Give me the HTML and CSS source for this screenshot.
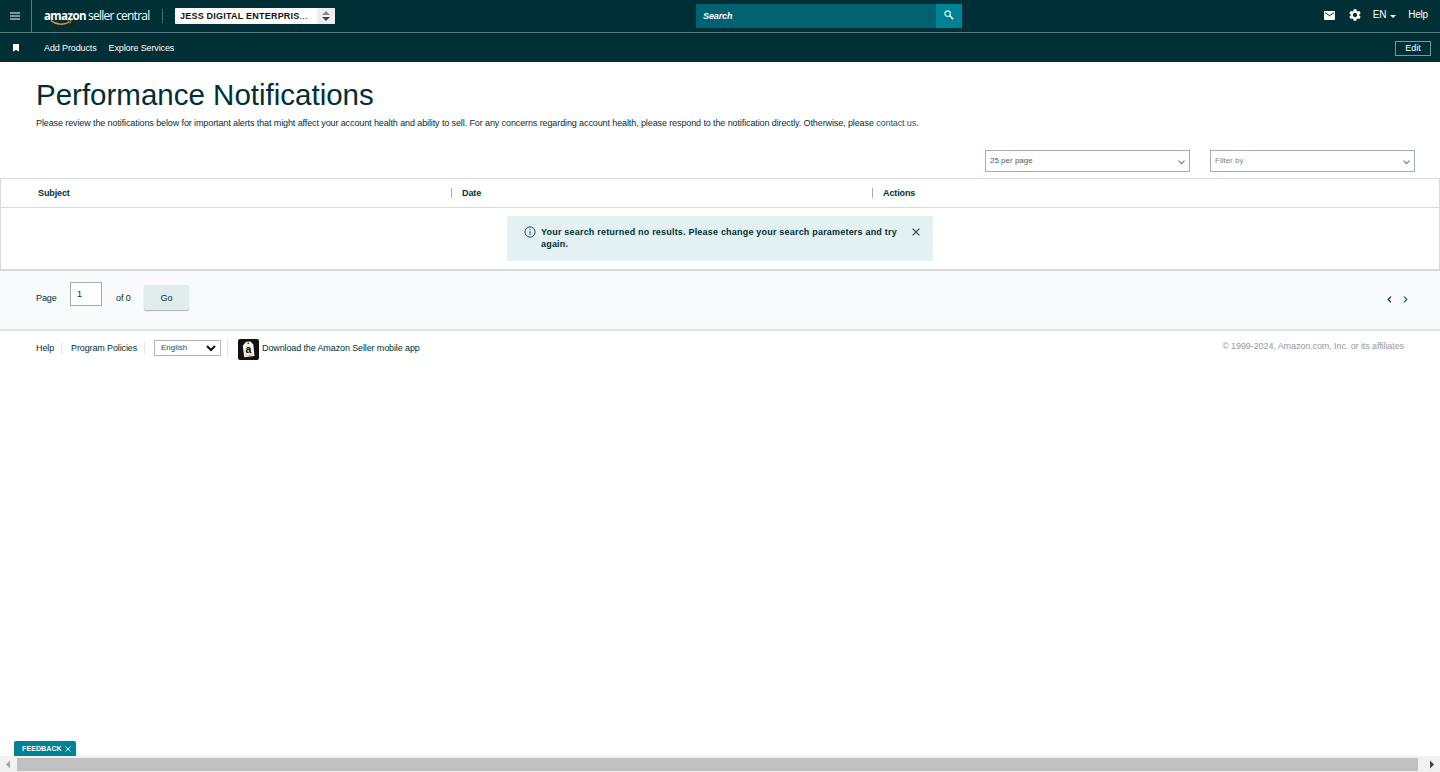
FILE: index.html
```html
<!DOCTYPE html>
<html lang="en">

<head>
    <meta charset="UTF-8">
    <meta name="viewport" content="width=device-width, initial-scale=1.0">
    <title>Performance Notifications</title>
    <link rel="stylesheet" href="styles.css">
</head>

<body>

    <header>
        <div class="topbar">
            <button type="button" class="menu-btn" aria-label="Menu">
                <svg width="10" height="8" viewBox="0 0 10 8"><path d="M0 1h10M0 4h10M0 7h10" stroke="#fff" stroke-width="1.2"/></svg>
            </button>
            <div class="logo">
                <span class="logo-bold">amazon</span><span class="logo-thin">seller central</span>
                <svg class="smile" width="23" height="7" viewBox="0 0 23 7" fill="none" stroke="#f0962a"><path d="M1 1.500c5 4.500 13 5 18.500 1.300" stroke-width="1.300"/><path d="M17.500 1.200c3-.8 4-.3 2.500 3.300"/></svg>
            </div>
            <div class="account">
                <span class="account-name">JESS DIGITAL ENTERPRIS<span class="dots">...</span></span>
                <span class="account-arrows">
                    <svg width="8" height="10" viewBox="0 0 8 10"><path d="M0 4l4-4 4 4z" fill="#888"/><path d="M0 6h8l-4 4z" fill="#444"/></svg>
                </span>
            </div>
            <form class="search">
                <div class="search-field">Search</div>
                <button type="button" class="search-btn" aria-label="Search">
                    <svg width="10" height="10" viewBox="0 0 11 11" fill="none" stroke="#e8f8fa"><circle cx="4" cy="4" r="3" stroke-width="1.300"/><path d="M6.300 6.300L10 10" stroke-width="1.700"/></svg>
                </button>
            </form>
            <nav class="tools">
                <svg class="mail" width="11" height="9" viewBox="0 0 11 9"><rect width="11" height="9" rx="1" fill="#fff"/><path d="M1 1.700l4.500 3 4.500-3" fill="none" stroke="#002f36"/></svg>
                <svg class="gear" width="12" height="12" viewBox="2 2 20 20"><path fill="#fff" d="M19.140 12.940c.04-.3.060-.61.060-.94 0-.32-.02-.64-.07-.94l2.030-1.580c.18-.14.230-.41.120-.61l-1.920-3.320c-.12-.22-.37-.29-.59-.22l-2.390.96c-.5-.38-1.030-.7-1.620-.94l-.36-2.540c-.04-.24-.24-.41-.48-.41h-3.840c-.24 0-.43.170-.47.410l-.36 2.540c-.59.240-1.130.570-1.620.940l-2.390-.96c-.22-.08-.47 0-.59.220L2.740 8.870c-.12.210-.08.470.12.610l2.030 1.580c-.05.300-.09.630-.09.940s.02.640.07.940l-2.030 1.580c-.18.140-.23.410-.12.610l1.920 3.320c.12.220.37.290.59.220l2.390-.96c.5.380 1.030.7 1.620.940l.36 2.540c.05.240.24.410.48.410h3.840c.24 0 .44-.17.470-.41l.36-2.540c.59-.24 1.130-.56 1.620-.94l2.390.96c.22.080.47 0 .59-.22l1.920-3.320c.12-.22.070-.47-.12-.61l-2.010-1.580zM12 15.600c-1.980 0-3.600-1.620-3.600-3.600s1.620-3.600 3.600-3.600 3.600 1.620 3.600 3.600-1.620 3.600-3.600 3.600z"/></svg>
                <span class="lang">EN</span>
                <svg class="caret" width="6" height="3" viewBox="0 0 6 3"><path d="M0 0h6L3 3z" fill="#fff"/></svg>
                <span class="help">Help</span>
            </nav>
        </div>
        <div class="subbar">
            <svg class="bookmark" width="6" height="8" viewBox="0 0 6 8"><path d="M0 0h6v7.500L3 6 0 7.500z" fill="#fff"/></svg>
            <a class="add">Add Products</a>
            <a class="explore">Explore Services</a>
            <button type="button" class="edit">Edit</button>
        </div>
    </header>

    <main>
        <h1>Performance Notifications</h1>
        <p class="intro">Please review the notifications below for important alerts that might affect your account health and ability to sell. For any concerns regarding account health, please respond to the notification directly. Otherwise, please <a>contact us</a>.</p>

        <div class="filters">
            <div class="dropdown per-page">
                <span>25 per page</span>
                <svg width="7" height="5" viewBox="0 0 7 5"><path d="M.5.700l3 3 3-3" fill="none" stroke="#758083" stroke-width="1.200"/></svg>
            </div>
            <div class="dropdown filter-by">
                <span>Filter by</span>
                <svg width="7" height="5" viewBox="0 0 7 5"><path d="M.5.700l3 3 3-3" fill="none" stroke="#758083" stroke-width="1.200"/></svg>
            </div>
        </div>

        <section class="table">
            <div class="table-head">
                <div class="subject">Subject</div>
                <div class="date">Date</div>
                <div class="actions">Actions</div>
            </div>
            <div class="table-body">
                <div class="alert">
                    <svg class="info" width="12" height="12" viewBox="0 0 12 12" fill="none" stroke="#25474f"><circle cx="6" cy="6" r="5.100"/><path d="M6 5.200v3.600M6 3v1.200"/></svg>
                    <p>Your search returned no results. Please change your search parameters and try<br>again.</p>
                    <svg class="close" width="8" height="8" viewBox="0 0 8 8"><path d="M.6.600l6.800 6.800M7.400.600L.6 7.400" stroke="#1b3d45" stroke-width="1.100"/></svg>
                </div>
            </div>
        </section>

        <section class="pager">
            <span class="page-label">Page</span>
            <div class="page-input">1</div>
            <span class="page-total">of 0</span>
            <button type="button" class="go">Go</button>
            <div class="arrows">
                <svg width="5" height="7" viewBox="0 0 5 7"><path d="M4 .7L1.200 3.500 4 6.300" fill="none" stroke="#002f36" stroke-width="1.200"/></svg>
                <svg width="5" height="7" viewBox="0 0 5 7"><path d="M1 .7l2.800 2.800L1 6.300" fill="none" stroke="#006078" stroke-width="1.200"/></svg>
            </div>
        </section>

        <footer>
            <a class="foot-help">Help</a>
            <a class="foot-policies">Program Policies</a>
            <div class="foot-lang">
                <div class="lang-select">
                    <span>English</span>
                    <svg width="10" height="7" viewBox="0 0 10 7"><path d="M1 1l4 4 4-4" fill="none" stroke="#111" stroke-width="2"/></svg>
                </div>
            </div>
            <svg class="app-icon" width="21" height="21" viewBox="0 0 21 21">
                <rect width="21" height="21" rx="2" fill="#111"/>
                <path d="M4.800 6.500l3.400-3.700 4.300-.4 2.800 3.200 1.200 11.400-10.300 1.300z" fill="#f5f2ea"/>
                <circle cx="10.200" cy="4.300" r=".8" fill="#111"/>
                <path d="M7.500 15.800c2.500 1 5 .8 7-.5" fill="none" stroke="#e59a35" stroke-width=".8"/>
                <text class="app-letter" x="7.600" y="13.800">a</text>
            </svg>
            <a class="foot-app">Download the Amazon Seller mobile app</a>
            <span class="copyright">© 1999-2024, Amazon.com, Inc. or its affiliates</span>
        </footer>
    </main>

    <div class="feedback">
        <span>FEEDBACK</span>
        <svg width="6" height="6" viewBox="0 0 6 6"><path d="M.5.500l5 5M5.500.500l-5 5" stroke="#fff" stroke-width=".9"/></svg>
    </div>

    <div class="scrollbar">
        <svg width="17" height="16" viewBox="0 0 17 16"><path d="M10 4.500v8L6 8.500z" fill="#a3a3a3"/></svg>
        <div class="thumb"></div>
        <svg width="22" height="16" viewBox="0 0 22 16"><path d="M12 4.500v8l4-4z" fill="#444"/></svg>
    </div>

</body>

</html>
```
FILE: styles.css
```css
* {
    box-sizing: border-box;
}

body {
    display: flex;
    flex-direction: column;
    height: 100vh;
    margin: 0;
    overflow: hidden;
    font-family: "Liberation Sans", Arial, sans-serif;
    font-size: 9px;
    letter-spacing: -0.12px;
    color: #002f36;
    background-color: #fff;
}

svg {
    display: block;
    flex: none;
}

button {
    padding: 0;
    border: none;
    font-family: inherit;
    font-size: 9px;
}

header {
    height: 62px;
    background-color: #002f36;
    color: #fff;
}

.topbar {
    display: flex;
    align-items: center;
    height: 33px;
    border-bottom: 1px solid #587b80;
}

.menu-btn {
    display: flex;
    align-items: center;
    justify-content: center;
    width: 32px;
    height: 32px;
    padding: 0 1px 1px 0;
    background: none;
    border-right: 1px solid #587b80;
}

.logo {
    position: relative;
    display: flex;
    align-items: center;
    width: 131px;
    height: 14px;
    padding-left: 12px;
    border-right: 1px solid #4d6e73;
    font-family: "Open Sans", sans-serif;
    font-size: 12px;
    line-height: 14px;
    white-space: nowrap;
}

.logo-bold {
    width: 44px;
    font-size: 11.5px;
    font-weight: 700;
    letter-spacing: -0.6px;
}

.logo-thin {
    letter-spacing: -0.75px;
}

.smile {
    position: absolute;
    left: 18px;
    top: 10px;
}

.account {
    display: flex;
    width: 160px;
    height: 16px;
    margin-left: 12px;
    background-color: #fff;
    border-radius: 1px;
    overflow: hidden;
}

.account-name {
    flex: 1;
    padding-left: 5px;
    font-size: 9px;
    font-weight: bold;
    line-height: 16px;
    letter-spacing: 0.22px;
    color: #111;
    white-space: nowrap;
}

.dots {
    font-weight: normal;
    letter-spacing: 0.3px;
}

.account-arrows {
    display: flex;
    align-items: center;
    justify-content: center;
    width: 18px;
    background-color: #eee;
}

.search {
    display: flex;
    width: 266px;
    height: 24px;
    margin-left: 361px;
}

.search-field {
    flex: 1;
    padding-left: 7px;
    background-color: #006170;
    font-size: 9px;
    font-style: italic;
    font-weight: bold;
    line-height: 24px;
}

.search-btn {
    display: flex;
    align-items: center;
    justify-content: center;
    width: 26px;
    padding-bottom: 2px;
    background-color: #008296;
}

.tools {
    display: flex;
    align-items: center;
    margin-left: auto;
    padding-right: 12px;
    line-height: 30px;
    height: 30px;
    margin-bottom: 2px;
    font-size: 10px;
}

.gear {
    margin-left: 14px;
}

.lang {
    margin-left: 12px;
    letter-spacing: -0.2px;
}

.caret {
    margin-left: 4px;
    margin-top: 2px;
}

.help {
    margin-left: 12px;
    letter-spacing: -0.2px;
}

.subbar {
    display: flex;
    align-items: center;
    height: 29px;
    padding-right: 9px;
    line-height: 29px;
}

.bookmark {
    margin: 0 25px 0 13px;
}

.add,
.explore {
    padding-top: 2px;
}

.explore {
    margin-left: 12px;
}

.edit {
    width: 36px;
    height: 15px;
    margin-left: auto;
    margin-top: 1px;
    background: none;
    border: 1px solid #7f979b;
    color: #fff;
}

main {
    flex: 1;
}

h1 {
    margin: 16px 0 0 36px;
    font-size: 29.5px;
    font-weight: normal;
    line-height: 34px;
    letter-spacing: 0;
}

.intro {
    margin: 5px 0 0 36px;
    line-height: 12px;
    letter-spacing: -0.107px;
    white-space: nowrap;
}

.intro a {
    color: #006078;
}

.filters {
    display: flex;
    justify-content: flex-end;
    gap: 20px;
    margin-top: 21px;
    padding-right: 25px;
}

.dropdown {
    display: flex;
    align-items: center;
    justify-content: space-between;
    width: 205px;
    height: 22px;
    padding: 0 4px 1px;
    border: 1px solid #a2adb0;
    font-size: 8px;
    letter-spacing: 0;
    color: #4a5d61;
}

.dropdown svg {
    margin-top: 4px;
}

.filter-by {
    color: #7c888b;
}

.table {
    margin-top: 6px;
    border: 1px solid #d5d9d9;
    border-bottom-width: 2px;
}

.table-head {
    display: grid;
    grid-template-columns: 450px 421px 1fr;
    align-items: center;
    height: 29px;
    border-bottom: 1px solid #d5d9d9;
    font-weight: bold;
}

.subject {
    padding-left: 37px;
}

.date,
.actions {
    padding-left: 10px;
    border-left: 1px solid #a2adb0;
}

.table-body {
    height: 61px;
    padding-top: 8px;
}

.alert {
    display: flex;
    align-items: flex-start;
    width: 426px;
    height: 45px;
    margin: 0 auto;
    padding: 10px 13px 0 17px;
    background-color: #e3f1f2;
}

.alert p {
    flex: 1;
    margin: 0 0 0 5px;
    font-size: 9px;
    font-weight: bold;
    line-height: 12px;
    letter-spacing: 0.2px;
    white-space: nowrap;
}

.close {
    margin-top: 2px;
}

.pager {
    display: flex;
    align-items: flex-start;
    height: 60px;
    padding: 11px 32px 0 36px;
    background-color: #f8fafc;
    border-bottom: 2px solid #e0e3e4;
}

.page-label,
.page-total {
    padding-top: 10px;
    line-height: 12px;
}

.page-label {
    width: 34px;
}

.page-input {
    width: 32px;
    height: 24px;
    padding-left: 6px;
    background-color: #fff;
    border: 1px solid #a2adb0;
    line-height: 22px;
}

.page-total {
    width: 42px;
    padding-left: 14px;
}

.go {
    width: 45px;
    height: 25px;
    margin-top: 3px;
    background-color: #e1eced;
    border-radius: 2px;
    box-shadow: 0 1px 1px #a9b5b7;
    color: #002f36;
}

.arrows {
    display: flex;
    gap: 11px;
    margin: 14px 0 0 auto;
}

footer {
    display: flex;
    align-items: center;
    height: 34px;
    padding: 2px 36px 0;
    line-height: 12px;
    white-space: nowrap;
}

.foot-help {
    width: 26px;
    border-right: 1px solid #e3e6e7;
}

.foot-policies {
    width: 83px;
    padding-left: 9px;
    border-right: 1px solid #e3e6e7;
}

.foot-lang {
    width: 83px;
    padding-left: 9px;
    border-right: 1px solid #e3e6e7;
}

.foot-help,
.foot-policies,
.foot-lang,
.foot-app {
    margin-bottom: 2px;
}

.lang-select {
    display: flex;
    align-items: center;
    justify-content: space-between;
    width: 67px;
    height: 16px;
    padding: 0 4px 0 6px;
    border: 1px solid #b5b5b5;
    font-size: 8px;
    letter-spacing: 0;
    color: #444;
}

.app-icon {
    margin-left: 10px;
}

.app-letter {
    font-size: 10.5px;
    font-weight: bold;
}

.foot-app {
    margin-left: 3px;
}

.copyright {
    margin: -6px 0 0 auto;
    letter-spacing: -0.09px;
    color: #949b9d;
}

/* sits over the page, on top of the scrollbar */
.feedback {
    position: fixed;
    left: 14px;
    bottom: 16px;
    display: flex;
    align-items: center;
    justify-content: space-between;
    width: 62px;
    height: 15px;
    padding: 0 5px 0 8px;
    background-color: #008296;
    border-radius: 2px 2px 0 0;
    color: #fff;
    font-size: 7px;
    font-weight: bold;
    letter-spacing: 0.1px;
}

.scrollbar {
    display: flex;
    align-items: center;
    height: 16px;
    background-color: #f1f1f1;
}

.thumb {
    flex: 1;
    height: 13px;
    background-color: #c1c1c1;
}
```
